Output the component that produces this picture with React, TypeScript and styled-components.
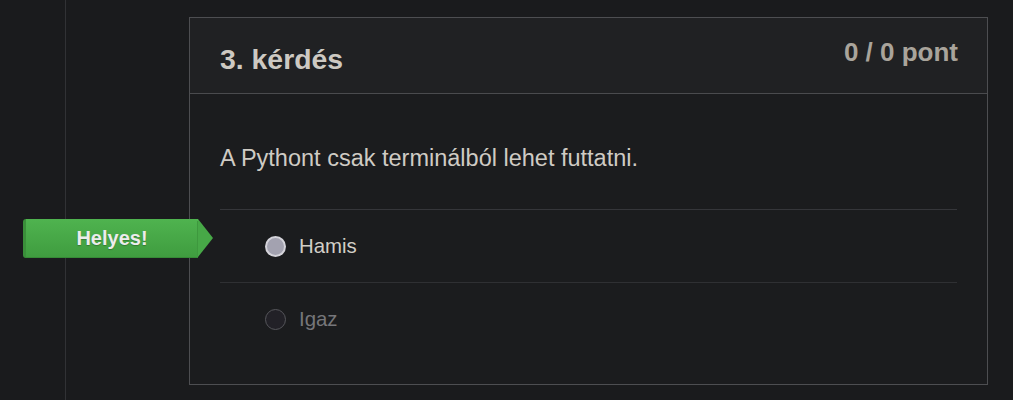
import React from "react";
import styled, { createGlobalStyle } from "styled-components";

const Global = createGlobalStyle`
  html, body { margin: 0; padding: 0; background: #1a1b1d; }
  body { font-family: "Liberation Sans", Arial, sans-serif; }
`;

const Page = styled.div`
  display: flex;
  min-height: 400px;
  background: #1a1b1d;
  overflow: hidden;
`;

const Rail = styled.div`
  width: 65px;
  flex: 0 0 65px;
  border-right: 1px solid #313235;
`;

const Card = styled.section`
  margin: 17px 0 0 123px;
  width: 799px;
  height: 368px;
  box-sizing: border-box;
  border: 1px solid #4d4e51;
  background: #1b1c1e;
  align-self: flex-start;
`;

const Header = styled.header`
  display: flex;
  justify-content: space-between;
  align-items: flex-start;
  height: 76px;
  box-sizing: border-box;
  padding: 0 29px 0 30px;
  background: #202123;
  border-bottom: 1px solid #4a4b4e;
`;

const Title = styled.h3`
  margin: 25px 0 0;
  font-size: 28.4px;
  line-height: 32px;
  font-weight: 700;
  color: #cdc9c2;
`;

const Points = styled.div`
  margin-top: 19px;
  font-size: 26px;
  line-height: 30px;
  font-weight: 700;
  color: #a9a49b;
`;

const Body = styled.div`
  padding: 0 30px;
`;

const Question = styled.p`
  margin: 0;
  padding: 50px 0 0;
  height: 115px;
  box-sizing: border-box;
  font-size: 23.5px;
  line-height: 28px;
  color: #cfcbc4;
`;

const Options = styled.ul`
  list-style: none;
  margin: 0;
  padding: 0;
  border-top: 1px solid #35363a;
`;

const Option = styled.li<{ $last?: boolean }>`
  position: relative;
  display: flex;
  align-items: center;
  gap: 13px;
  height: 72px;
  padding-left: 45px;
  border-bottom: ${(p) => (p.$last ? "none" : "1px solid #2f3033")};
`;

const Radio = styled.span<{ $checked?: boolean }>`
  width: 21px;
  height: 21px;
  box-sizing: border-box;
  border-radius: 50%;
  border: ${(p) => (p.$checked ? "2px solid #d4d3da" : "1px solid #56565b")};
  background: ${(p) => (p.$checked ? "#a3a2b0" : "#222127")};
`;

const Label = styled.span<{ $dim?: boolean }>`
  font-size: 20.4px;
  color: ${(p) => (p.$dim ? "#76767a" : "#d2cec7")};
`;

const Badge = styled.div`
  position: absolute;
  left: -197px;
  top: 9px;
  width: 175px;
  height: 39px;
  box-sizing: border-box;
  display: flex;
  align-items: center;
  justify-content: center;
  background: linear-gradient(#4fb34f, #3f9c3f);
  border-left: 3px solid #3a8f3a;
  border-radius: 3px 0 0 3px;
  box-shadow: inset 0 -1px 0 #368a36;
  font-size: 20px;
  font-weight: 700;
  color: #ececec;
  text-shadow: 0 1px 1px rgba(0, 0, 0, 0.25);

  &::after {
    content: "";
    position: absolute;
    right: -15px;
    top: 0;
    border-top: 19.5px solid transparent;
    border-bottom: 19.5px solid transparent;
    border-left: 15px solid #47a847;
  }
  &::before {
    content: "";
    position: absolute;
    right: 0;
    top: 2px;
    bottom: 2px;
    width: 1px;
    background: #3e983e;
  }
`;

export default function App() {
  return (
    <>
      <Global />
      <Page>
        <Rail />
        <Card>
          <Header>
            <Title>3. kérdés</Title>
            <Points>0 / 0 pont</Points>
          </Header>
          <Body>
            <Question>A Pythont csak terminálból lehet futtatni.</Question>
            <Options>
              <Option>
                <Badge>Helyes!</Badge>
                <Radio $checked />
                <Label>Hamis</Label>
              </Option>
              <Option $last>
                <Radio />
                <Label $dim>Igaz</Label>
              </Option>
            </Options>
          </Body>
        </Card>
      </Page>
    </>
  );
}
